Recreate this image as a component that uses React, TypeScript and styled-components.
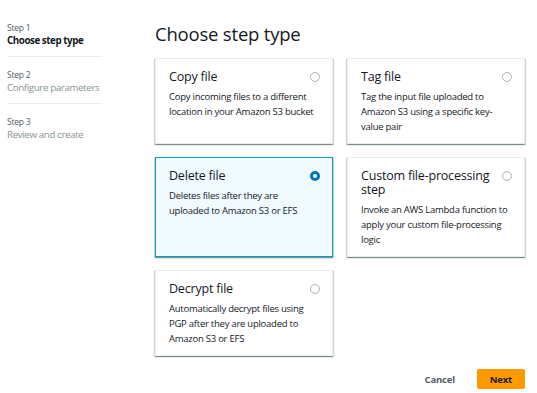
import React, { useState } from "react";
import styled, { createGlobalStyle } from "styled-components";

const GlobalStyle = createGlobalStyle`
  body {
    margin: 0;
    background: #ffffff;
    font-family: "Open Sans", "Noto Sans", sans-serif;
    color: #16191f;
  }
`;

const Page = styled.div`
  display: flex;
  width: 537px;
  height: 393px;
  padding-left: 7px;
  box-sizing: border-box;
`;

const Sidebar = styled.nav`
  width: 95px;
  padding-top: 10px;
  flex-shrink: 0;
`;

const StepItem = styled.div<{ $last?: boolean }>`
  padding: 11px 0 8px;
  border-bottom: ${(p) => (p.$last ? "none" : "1px solid #eaeded")};
`;

const StepNumber = styled.div`
  font-size: 8.5px;
  line-height: 13px;
  letter-spacing: -0.2px;
  color: #545b64;
`;

const StepLabel = styled.div<{ $active?: boolean }>`
  font-size: 9.8px;
  line-height: 14px;
  letter-spacing: ${(p) => (p.$active ? "-0.45px" : "-0.4px")};
  font-weight: ${(p) => (p.$active ? 700 : 400)};
  color: ${(p) => (p.$active ? "#16191f" : "#879596")};
  white-space: nowrap;
`;

const Main = styled.main`
  margin-left: 53px;
  width: 370px;
  padding-top: 22px;
`;

const Title = styled.h1`
  margin: 0 0 12px;
  font-size: 18.5px;
  line-height: 24px;
  letter-spacing: -0.2px;
  font-weight: 400;
`;

const Grid = styled.div`
  display: grid;
  grid-template-columns: 1fr 1fr;
  column-gap: 14px;
  row-gap: 13px;
`;

const Card = styled.div<{ $selected?: boolean }>`
  padding: 11px 12px 9px 13px;
  box-sizing: border-box;
  background: ${(p) => (p.$selected ? "#f1faff" : "#ffffff")};
  border: 1px solid ${(p) => (p.$selected ? "#00a1c9" : "#eaeded")};
  box-shadow: 0 1px 1px 0 rgba(0, 28, 36, 0.3),
    1px 1px 1px 0 rgba(0, 28, 36, 0.15), -1px 1px 1px 0 rgba(0, 28, 36, 0.15);
  cursor: pointer;
`;

const CardHeader = styled.div`
  display: flex;
  align-items: flex-start;
  justify-content: space-between;
  gap: 8px;
`;

const CardTitle = styled.div`
  font-size: 12.5px;
  line-height: 14px;
  letter-spacing: -0.2px;
  color: #16191f;
`;

const CardText = styled.div`
  margin-top: 5px;
  font-size: 9.5px;
  line-height: 15px;
  letter-spacing: -0.25px;
  color: #16191f;
`;

const Radio = styled.span<{ $checked?: boolean }>`
  flex-shrink: 0;
  margin-top: 2px;
  width: 10px;
  height: 10px;
  box-sizing: border-box;
  border-radius: 50%;
  background: #ffffff;
  border: ${(p) => (p.$checked ? "3px solid #0073bb" : "1px solid #aab7b8")};
`;

const Footer = styled.div`
  display: flex;
  justify-content: flex-end;
  align-items: center;
  gap: 9px;
  margin-top: 13px;
`;

const Button = styled.button<{ $primary?: boolean }>`
  height: 20px;
  padding: 0 13px;
  border: none;
  border-radius: 2px;
  font-family: inherit;
  font-size: 9.5px;
  font-weight: 700;
  letter-spacing: -0.2px;
  background: ${(p) => (p.$primary ? "#ff9900" : "transparent")};
  color: ${(p) => (p.$primary ? "#16191f" : "#545b64")};
  cursor: pointer;
`;

const steps = [
  { n: "Step 1", label: "Choose step type" },
  { n: "Step 2", label: "Configure parameters" },
  { n: "Step 3", label: "Review and create" },
];

const options = [
  {
    key: "copy",
    title: "Copy file",
    text: "Copy incoming files to a different location in your Amazon S3 bucket",
  },
  {
    key: "tag",
    title: "Tag file",
    text: "Tag the input file uploaded to Amazon S3 using a specific key-value pair",
  },
  {
    key: "delete",
    title: "Delete file",
    text: "Deletes files after they are uploaded to Amazon S3 or EFS",
  },
  {
    key: "custom",
    title: "Custom file-processing step",
    text: "Invoke an AWS Lambda function to apply your custom file-processing logic",
  },
  {
    key: "decrypt",
    title: "Decrypt file",
    text: "Automatically decrypt files using PGP after they are uploaded to Amazon S3 or EFS",
  },
];

export default function App() {
  const [selected, setSelected] = useState("delete");

  return (
    <>
      <GlobalStyle />
      <Page>
        <Sidebar>
          {steps.map((s, i) => (
            <StepItem key={s.n} $last={i === steps.length - 1}>
              <StepNumber>{s.n}</StepNumber>
              <StepLabel $active={i === 0}>{s.label}</StepLabel>
            </StepItem>
          ))}
        </Sidebar>
        <Main>
          <Title>Choose step type</Title>
          <Grid>
            {options.map((o) => (
              <Card
                key={o.key}
                $selected={selected === o.key}
                onClick={() => setSelected(o.key)}
              >
                <CardHeader>
                  <CardTitle>{o.title}</CardTitle>
                  <Radio $checked={selected === o.key} />
                </CardHeader>
                <CardText>{o.text}</CardText>
              </Card>
            ))}
          </Grid>
          <Footer>
            <Button>Cancel</Button>
            <Button $primary>Next</Button>
          </Footer>
        </Main>
      </Page>
    </>
  );
}
